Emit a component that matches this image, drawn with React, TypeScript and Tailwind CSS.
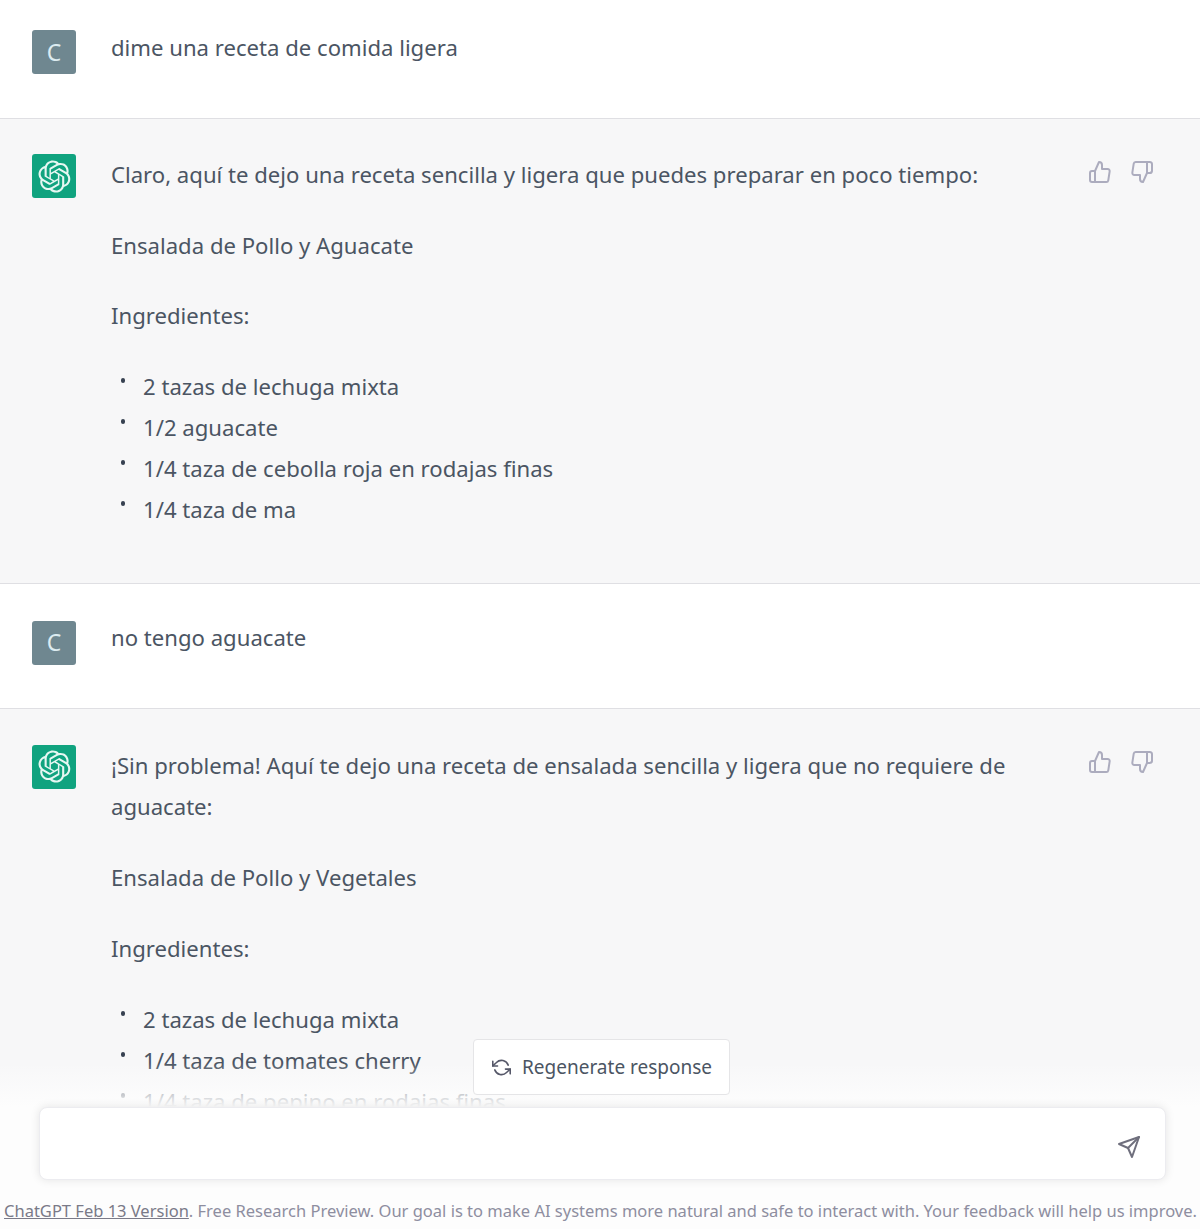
import React from "react";

const LOGO = "M37.5324 16.8707C37.9808 15.5241 38.1363 14.0974 37.9886 12.6859C37.8409 11.2744 37.3934 9.91076 36.676 8.68622C35.6126 6.83404 33.9882 5.3676 32.0373 4.4985C30.0864 3.62941 27.9098 3.40259 25.8215 3.85078C24.8796 2.7893 23.7219 1.94125 22.4257 1.36341C21.1295 0.785575 19.7249 0.491269 18.3058 0.500197C16.1708 0.495044 14.0893 1.16803 12.3614 2.42214C10.6335 3.67624 9.34853 5.44666 8.6917 7.47815C7.30085 7.76286 5.98686 8.3414 4.8377 9.17505C3.68854 10.0087 2.73073 11.0782 2.02839 12.312C0.956464 14.1591 0.498905 16.2988 0.721698 18.4228C0.944492 20.5467 1.83612 22.5449 3.268 24.1293C2.81966 25.4759 2.66413 26.9026 2.81182 28.3141C2.95951 29.7256 3.40701 31.0892 4.12437 32.3138C5.18791 34.1659 6.8123 35.6322 8.76321 36.5013C10.7141 37.3704 12.8907 37.5973 14.9789 37.1492C15.9208 38.2107 17.0786 39.0587 18.3747 39.6366C19.6709 40.2144 21.0755 40.5087 22.4946 40.4998C24.6307 40.5054 26.7133 39.8321 28.4418 38.5772C30.1704 37.3223 31.4556 35.5506 32.1119 33.5179C33.5027 33.2332 34.8167 32.6547 35.9659 31.821C37.115 30.9874 38.0728 29.9178 38.7752 28.684C39.8458 26.8371 40.3023 24.6979 40.0789 22.5748C39.8556 20.4517 38.9639 18.4544 37.5324 16.8707ZM22.4978 37.8849C20.7443 37.8874 19.0459 37.2733 17.6994 36.1501C17.7601 36.117 17.8666 36.0586 17.936 36.0161L25.9004 31.4156C26.1003 31.3019 26.2663 31.137 26.3813 30.9378C26.4964 30.7386 26.5563 30.5124 26.5549 30.2825V19.0542L29.9213 20.998C29.9389 21.0068 29.9541 21.0198 29.9656 21.0359C29.977 21.052 29.9842 21.0707 29.9867 21.0902V30.3889C29.9842 32.375 29.1946 34.2791 27.7909 35.6841C26.3872 37.0892 24.4838 37.8806 22.4978 37.8849ZM6.39227 31.0064C5.51397 29.4888 5.19742 27.7107 5.49804 25.9832C5.55718 26.0187 5.66048 26.0818 5.73461 26.1244L13.699 30.7248C13.8975 30.8408 14.1233 30.902 14.3532 30.902C14.583 30.902 14.8088 30.8408 15.0073 30.7248L24.731 25.1103V28.9979C24.7321 29.0177 24.7283 29.0376 24.7199 29.0556C24.7115 29.0736 24.6988 29.0893 24.6829 29.1012L16.6317 33.7497C14.9096 34.7416 12.8643 35.0097 10.9447 34.4954C9.02506 33.9811 7.38785 32.7263 6.39227 31.0064ZM4.29707 13.6194C5.17156 12.0998 6.55279 10.9364 8.19885 10.3327C8.19885 10.4013 8.19491 10.5228 8.19491 10.6071V19.808C8.19351 20.0378 8.25334 20.2638 8.36823 20.4629C8.48312 20.6619 8.64893 20.8267 8.84863 20.9404L18.5723 26.5542L15.206 28.4979C15.1894 28.5089 15.1703 28.5155 15.1505 28.5173C15.1307 28.5191 15.1107 28.516 15.0924 28.5082L7.04046 23.8557C5.32135 22.8601 4.06716 21.2235 3.55289 19.3046C3.03862 17.3858 3.30624 15.3413 4.29707 13.6194ZM31.955 20.0556L22.2312 14.4411L25.5976 12.4981C25.6142 12.4872 25.6333 12.4805 25.6531 12.4787C25.6729 12.4769 25.6928 12.4801 25.7111 12.4879L33.7631 17.1364C34.9967 17.849 36.0017 18.8982 36.6606 20.1613C37.3194 21.4244 37.6047 22.849 37.4832 24.2684C37.3617 25.6878 36.8382 27.0432 35.9743 28.1759C35.1103 29.3086 33.9415 30.1717 32.6047 30.6641C32.6047 30.5947 32.6047 30.4733 32.6047 30.3889V21.188C32.6066 20.9586 32.5474 20.7328 32.4332 20.5338C32.319 20.3348 32.154 20.1698 31.955 20.0556ZM35.3055 15.0128C35.2464 14.9765 35.1431 14.9142 35.069 14.8717L27.1045 10.2712C26.906 10.1554 26.6803 10.0943 26.4504 10.0943C26.2206 10.0943 25.9948 10.1554 25.7963 10.2712L16.0726 15.8858V11.9982C16.0715 11.9783 16.0753 11.9585 16.0837 11.9405C16.0921 11.9225 16.1048 11.9068 16.1207 11.8949L24.1719 7.25025C25.4053 6.53903 26.8158 6.19376 28.2383 6.25482C29.6608 6.31589 31.0364 6.78077 32.2044 7.59508C33.3723 8.40939 34.2842 9.53945 34.8334 10.8531C35.3826 12.1667 35.5464 13.6095 35.3055 15.0128ZM14.2424 21.9419L10.8752 19.9981C10.8576 19.9893 10.8423 19.9763 10.8309 19.9602C10.8195 19.9441 10.8122 19.9254 10.8098 19.9058V10.6071C10.8107 9.18295 11.2173 7.78848 11.9819 6.58696C12.7466 5.38544 13.8377 4.42659 15.1275 3.82264C16.4173 3.21869 17.8524 2.99464 19.2649 3.1767C20.6775 3.35876 22.0089 3.93941 23.1034 4.85067C23.0427 4.88379 22.937 4.94215 22.8668 4.98473L14.9024 9.58517C14.7025 9.69878 14.5366 9.86356 14.4215 10.0626C14.3065 10.2616 14.2466 10.4877 14.2479 10.7175L14.2424 21.9419ZM16.071 17.9991L20.4018 15.4978L24.7325 17.9975V22.9985L20.4018 25.4983L16.071 22.9985V17.9991Z";

function UserAvatar() {
  return (
    <div className="w-[44px] h-[44px] shrink-0 rounded-[3px] bg-[#6f8790] text-[#dcebf0] flex items-center justify-center text-[23px]">
      C
    </div>
  );
}

function BotAvatar() {
  return (
    <div className="w-[44px] h-[44px] shrink-0 rounded-[3px] bg-[#10a37f] flex items-center justify-center">
      <svg viewBox="0 0 41 41" className="w-[33px] h-[33px]" fill="#e6f7f2">
        <path d={LOGO} />
      </svg>
    </div>
  );
}

function Thumbs({ last }: { last?: boolean }) {
  const cls = "w-[24px] h-[24px]";
  return (
    <div className={`flex gap-[18px] shrink-0 text-[#acacbe] ml-auto mr-[46px] h-[24px] ${last ? "mt-[5px]" : "mt-[6px]"}`}>
      <svg viewBox="0 0 24 24" className={cls} fill="none" stroke="currentColor" strokeWidth="2" strokeLinecap="round" strokeLinejoin="round">
        <path d="M14 9V5a3 3 0 0 0-3-3l-4 9v11h11.28a2 2 0 0 0 2-1.7l1.38-9a2 2 0 0 0-2-2.3zM7 22H4a2 2 0 0 1-2-2v-7a2 2 0 0 1 2-2h3" />
      </svg>
      <svg viewBox="0 0 24 24" className={cls} fill="none" stroke="currentColor" strokeWidth="2" strokeLinecap="round" strokeLinejoin="round">
        <path d="M10 15v4a3 3 0 0 0 3 3l4-9V2H5.72a2 2 0 0 0-2 1.7l-1.38 9a2 2 0 0 0 2 2.3zm7-13h2.67A2.31 2.31 0 0 1 22 4v7a2.31 2.31 0 0 1-2.33 2H17" />
      </svg>
    </div>
  );
}

function Bullets({ items }: { items: string[] }) {
  return (
    <ul>
      {items.map((t) => (
        <li key={t} className="relative pl-[32px]">
          <span className="absolute left-[10px] top-[12px] w-[4px] h-[5px] rounded-full bg-[#374151]" />
          {t}
        </li>
      ))}
    </ul>
  );
}

function UserRow({ text, first }: { text: string; first?: boolean }) {
  return (
    <div className={`flex gap-[35px] pl-[32px] bg-white ${first ? "h-[118px] pt-[30px]" : "h-[124px] pt-[37px]"}`}>
      <UserAvatar />
      <div className={first ? "-mt-[3px]" : "-mt-[4px]"}>{text}</div>
    </div>
  );
}

function BotRow({ children, last }: { children: React.ReactNode; last?: boolean }) {
  return (
    <div className={`flex pl-[32px] bg-[#f7f7f8] border-t border-[#dfdfe3] ${last ? "pt-[36px]" : "pt-[35px] border-b pb-[53px]"}`}>
      <BotAvatar />
      <div className={`ml-[35px] w-[930px] flex flex-col ${last ? "gap-[30px]" : "gap-[29.5px]"}`}>{children}</div>
      <Thumbs last={last} />
    </div>
  );
}

export default function App() {
  return (
    <div className="relative w-[1200px] h-[1229px] overflow-hidden bg-white text-[#4b5563] text-[22.13px] leading-[41px] font-['Noto_Sans',sans-serif]">
      <UserRow first text="dime una receta de comida ligera" />
      <BotRow>
        <p>Claro, aquí te dejo una receta sencilla y ligera que puedes preparar en poco tiempo:</p>
        <p>Ensalada de Pollo y Aguacate</p>
        <p>Ingredientes:</p>
        <Bullets items={["2 tazas de lechuga mixta", "1/2 aguacate", "1/4 taza de cebolla roja en rodajas finas", "1/4 taza de ma"]} />
      </BotRow>
      <UserRow text="no tengo aguacate" />
      <BotRow last>
        <p>¡Sin problema! Aquí te dejo una receta de ensalada sencilla y ligera que no requiere de aguacate:</p>
        <p>Ensalada de Pollo y Vegetales</p>
        <p>Ingredientes:</p>
        <Bullets items={["2 tazas de lechuga mixta", "1/4 taza de tomates cherry", "1/4 taza de pepino en rodajas finas"]} />
      </BotRow>

      <div className="absolute left-0 right-0 bottom-0 h-[190px] flex flex-col">
        <div className="h-[68px] shrink-0 bg-gradient-to-b from-white/0 from-[35%] to-[#fdfdfd] relative">
          <div className="absolute left-[473px] top-[0px] w-[257px] h-[56px] bg-white border border-[#e5e5e7] rounded-[4px] flex items-center pl-[18px] gap-[11px] text-[19px] whitespace-nowrap text-[#4b5563]">
            <svg viewBox="0 0 24 24" className="w-[19px] h-[19px] text-[#565869]" fill="none" stroke="currentColor" strokeWidth="2" strokeLinecap="round" strokeLinejoin="round">
              <polyline points="1 4 1 10 7 10" />
              <polyline points="23 20 23 14 17 14" />
              <path d="M20.49 9A9 9 0 0 0 5.64 5.64L1 10m22 4l-4.64 4.36A9 9 0 0 1 3.51 15" />
            </svg>
            <span>Regenerate response</span>
          </div>
        </div>
        <div className="flex-1 bg-[#fdfdfd] pl-[39px] pr-[34px] relative">
          <div className="h-[73px] bg-white rounded-[8px] border border-[#ececf0] shadow-[0_0_10px_rgba(0,0,0,0.10)] flex items-center justify-end pr-[24px]">
            <svg viewBox="0 0 24 24" className="w-[24px] h-[24px] text-[#6f6f7d] mt-[6px]" fill="none" stroke="currentColor" strokeWidth="2" strokeLinecap="round" strokeLinejoin="round">
              <line x1="22" y1="2" x2="11" y2="13" />
              <polygon points="22 2 15 22 11 13 2 9 22 2" />
            </svg>
          </div>
          <div className="absolute left-[1px] right-0 top-[90px] text-center whitespace-nowrap text-[16.5px] leading-[28px] text-[#8e8ea0]">
            <span className="underline text-[#7a7a88]">ChatGPT Feb 13 Version</span>. Free Research Preview. Our goal is to make AI systems more natural and safe to interact with. Your feedback will help us improve.
          </div>
        </div>
      </div>
    </div>
  );
}
